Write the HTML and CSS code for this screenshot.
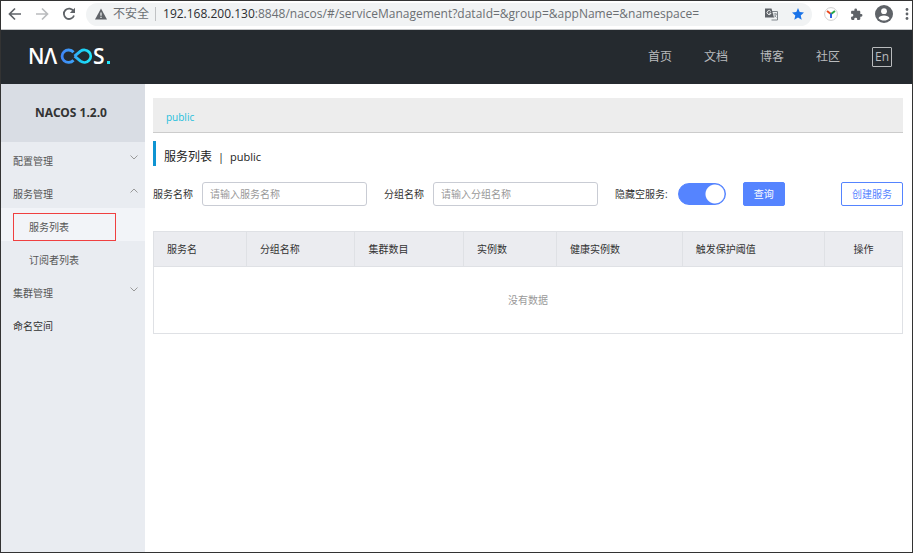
FILE: index.html
```html
<!DOCTYPE html>
<html lang="zh-CN">
<head>
<meta charset="utf-8">
<title>Nacos</title>
<link rel="stylesheet" href="styles.css">
</head>
<body>
<div class="toolbar">
  <button class="tool" aria-label="后退"><svg width="14" height="14" viewBox="0 0 14 14"><path d="M13 7H2M7 1.500 1.500 7 7 12.500" fill="none" stroke="#5f6368" stroke-width="1.700"/></svg></button>
  <button class="tool" aria-label="前进"><svg width="14" height="14" viewBox="0 0 14 14"><path d="M1 7h11M7 1.500 12.500 7 7 12.500" fill="none" stroke="#babcbe" stroke-width="1.700"/></svg></button>
  <button class="tool" aria-label="刷新"><svg width="14" height="14" viewBox="0 0 14 14"><path d="M11.600 4.200A5.200 5.200 0 1 0 12 8.500" fill="none" stroke="#5f6368" stroke-width="1.800"/><path d="M13 .8V6H7.800z" fill="#5f6368"/></svg></button>
  <div class="address">
    <svg width="12" height="12" viewBox="0 0 12 12"><path d="M6 .5 12 11.500H0z" fill="#5f6368"/><path d="M6 4.500v3.300M6 8.700v1.400" stroke="#f1f3f4" stroke-width="1.200"/></svg>
    <span class="insecure">不安全</span>
    <span class="url"><b>192.168.200.130</b>:8848/nacos/#/serviceManagement?dataId=&amp;group=&amp;appName=&amp;namespace=</span>
    <button class="tool" aria-label="翻译"><svg width="13" height="13" viewBox="0 0 13 13"><path d="M5 3.500h7.500v8.500H6.500" fill="#f1f3f4" stroke="#80868b"/><path d="M0 .5h6.500l2.500 9H0z" fill="#5f6368"/><path d="M5.800 3.500A2 2 0 1 0 6 5.200H4.200" fill="none" stroke="#fff" stroke-width=".9"/><path d="M8.500 6H12M10.200 5v1M11.300 6c-.3 1.600-1.300 2.700-2.300 3.500M9.500 7.500l2 2" fill="none" stroke="#80868b" stroke-width=".8"/></svg></button>
    <button class="tool" aria-label="收藏"><svg width="12" height="12" viewBox="0 0 12 12"><path d="m6 0 1.700 4.100 4.300.4-3.300 2.900 1 4.400L6 9.500l-3.700 2.300 1-4.400L0 4.500l4.300-.4z" fill="#1a73e8"/></svg></button>
  </div>
  <div class="extensions">
    <button class="tool" aria-label="扩展"><svg width="14" height="14" viewBox="0 0 14 14"><circle cx="7" cy="7" r="6.400" fill="#fff" stroke="#d0d0d0"/><path d="M7 7 3 4" stroke="#ea4a1f" stroke-width="2"/><path d="m7 7 4-3" stroke="#25a845" stroke-width="2"/><path d="M7 6.500V11" stroke="#2f63e0" stroke-width="2"/></svg></button>
    <button class="tool" aria-label="扩展程序"><svg width="13" height="13" viewBox="0 0 24 24"><path d="M20.500 11H19V7c0-1.100-.9-2-2-2h-4V3.500a2.500 2.500 0 0 0-5 0V5H4c-1.100 0-2 .9-2 2v3.800h1.500a2.700 2.700 0 0 1 0 5.400H2V20c0 1.100.9 2 2 2h3.800v-1.500a2.700 2.700 0 0 1 5.400 0V22H17c1.100 0 2-.9 2-2v-4h1.500a2.500 2.500 0 0 0 0-5z" fill="#5f6368"/></svg></button>
    <button class="tool" aria-label="用户"><svg width="18" height="18" viewBox="0 0 18 18"><circle cx="9" cy="9" r="9" fill="#5f6368"/><circle cx="9" cy="6.200" r="2.900" fill="#fff"/><path d="M3.500 13.200C4.300 9.600 13.700 9.600 14.500 13.200 11.600 16.400 6.400 16.400 3.500 13.200z" fill="#fff"/></svg></button>
    <button class="tool" aria-label="菜单"><svg width="4" height="12" viewBox="0 0 4 12"><g fill="#5f6368"><circle cx="2" cy="1.500" r="1.400"/><circle cx="2" cy="6" r="1.400"/><circle cx="2" cy="10.500" r="1.400"/></g></svg></button>
  </div>
</div>

<header class="header">
  <a class="logo" href="#" aria-label="Nacos">
    <svg width="84" height="32" viewBox="0 0 84 32">
      <defs><linearGradient id="loop" gradientUnits="userSpaceOnUse" x1="31" y1="0" x2="63" y2="0"><stop offset="0" stop-color="#3f82f7"/><stop offset=".45" stop-color="#3da5f8"/><stop offset=".65" stop-color="#1ccbf5"/><stop offset="1" stop-color="#22e6fb"/></linearGradient></defs>
      <text class="logo-text" x="-1" y="23">N</text>
      <text class="logo-text" x="15" y="23">Λ</text>
      <path d="M44.500 11.200A6.500 6.200 0 1 0 44.500 19.200M45.500 15.200 51.500 10.200A6.400 6.200 0 1 1 51.500 20.200L45.500 15.200" fill="none" stroke="url(#loop)" stroke-width="2.800"/>
      <text class="logo-text" x="64" y="23">S</text>
      <rect x="78" y="20" width="3" height="3" fill="#22e6fb"/>
    </svg>
  </a>
  <nav class="nav">
    <a href="#">首页</a>
    <a href="#">文档</a>
    <a href="#">博客</a>
    <a href="#">社区</a>
    <button class="lang">En</button>
  </nav>
</header>

<div class="layout">
  <aside class="sidebar">
    <h1 class="version">NACOS 1.2.0</h1>
    <nav class="menu">
      <a class="item" href="#">配置管理<svg class="arrow" width="8" height="5" viewBox="0 0 8 5"><path d="m.5.5 3.500 3.500L7.500.5"/></svg></a>
      <a class="item" href="#">服务管理<svg class="arrow" width="8" height="5" viewBox="0 0 8 5"><path d="M.5 4.500 4 1l3.500 3.500"/></svg></a>
      <a class="item sub active" href="#"><span class="marked">服务列表</span></a>
      <a class="item sub" href="#"><span>订阅者列表</span></a>
      <a class="item" href="#">集群管理<svg class="arrow" width="8" height="5" viewBox="0 0 8 5"><path d="m.5.5 3.500 3.500L7.500.5"/></svg></a>
      <a class="item leaf" href="#">命名空间</a>
    </nav>
  </aside>

  <main class="main">
    <div class="namespaces"><a href="#">public</a></div>
    <h2 class="title"><span>服务列表</span><span>|</span><span>public</span></h2>
    <form class="search">
      <label for="service">服务名称</label>
      <input class="field" id="service" type="text" placeholder="请输入服务名称">
      <label for="group">分组名称</label>
      <input class="field" id="group" type="text" placeholder="请输入分组名称">
      <label for="hide">隐藏空服务:</label>
      <input class="switch" id="hide" type="checkbox" role="switch" checked>
      <button class="btn primary" type="button">查询</button>
      <button class="btn outline" type="button">创建服务</button>
    </form>
    <table class="services">
      <colgroup><col class="c-name"><col class="c-group"><col class="c-cluster"><col class="c-inst"><col class="c-healthy"><col class="c-limit"><col class="c-action"></colgroup>
      <thead><tr><th>服务名</th><th>分组名称</th><th>集群数目</th><th>实例数</th><th>健康实例数</th><th>触发保护阈值</th><th class="action">操作</th></tr></thead>
      <tbody><tr><td colspan="7">没有数据</td></tr></tbody>
    </table>
  </main>
</div>
</body>
</html>
```

FILE: styles.css
```css
* {
  box-sizing: border-box;
}

body {
  margin: 0;
  min-height: 100vh;
  display: flex;
  flex-direction: column;
  border: 1px solid #333;
  background: #fff;
  color: #333;
  font-family: "Open Sans", "Noto Sans CJK SC", sans-serif;
  font-size: 10px;
  line-height: 16px;
}

a {
  color: inherit;
  text-decoration: none;
}

button,
input {
  font: inherit;
}

svg {
  display: block;
}

/* Browser toolbar */
.toolbar {
  display: flex;
  align-items: center;
  gap: 13px;
  height: 29px;
  padding: 0 3px 2px 7px;
  border-bottom: 1px solid #c4c6c8;
}

.tool {
  flex: none;
  padding: 0;
  border: 0;
  background: none;
}

.address {
  flex: 1;
  display: flex;
  align-items: center;
  gap: 6px;
  height: 23px;
  margin: 0 12px 0 -3px;
  padding: 0 8px 0 9px;
  border-radius: 12px;
  background: #f1f3f4;
  color: #6b6f73;
  font-size: 12px;
  white-space: nowrap;
}

.insecure {
  padding-right: 6px;
  border-right: 1px solid #c0c2c4;
  line-height: 14px;
}

.url {
  flex: 1;
  padding-left: 1px;
}

.url b {
  color: #2b2d30;
  font-weight: 400;
}

.address .tool + .tool {
  margin-left: 8px;
}

.extensions {
  display: flex;
  align-items: center;
  gap: 12px;
  margin-left: -13px;
}

/* Site header */
.header {
  display: flex;
  align-items: center;
  justify-content: space-between;
  height: 54px;
  padding: 0 20px 0 28px;
  background: #252a2f;
}

.logo-text {
  fill: #fff;
  font-family: "Open Sans", sans-serif;
  font-size: 21px;
  font-weight: 600;
}

.nav {
  display: flex;
  align-items: center;
  gap: 32px;
  color: #b9bbbd;
  font-size: 12px;
}

.lang {
  width: 20px;
  height: 20px;
  padding: 0;
  border: 1px solid #b9bbbd;
  border-radius: 1px;
  background: none;
  color: inherit;
  line-height: 16px;
}

/* Sidebar */
.layout {
  flex: 1;
  display: flex;
}

.sidebar {
  flex: none;
  width: 144px;
  background: #e9ecf1;
}

.version {
  margin: 0;
  padding-right: 4px;
  background: #d9dde4;
  font-family: "Noto Sans", sans-serif;
  font-size: 12px;
  font-weight: 700;
  line-height: 58px;
  text-align: center;
}

.item {
  display: flex;
  align-items: center;
  justify-content: space-between;
  height: 33px;
  padding: 4px 7px 0 12px;
  color: #555;
}

.leaf {
  color: #333;
}

.arrow {
  margin-bottom: 6px;
  fill: none;
  stroke: #999;
}

.sub span {
  width: 103px;
  padding: 5px 15px;
  border: 1px solid transparent;
}

.active {
  background: #f2f4f8;
}

.sub .marked {
  border-color: #f04040;
}

/* Content */
.main {
  flex: 1;
  min-width: 0;
  padding: 14px 9px 0 8px;
}

.namespaces {
  padding: 11px 13px 7px;
  border-bottom: 1px solid #ccc;
  background: #ededed;
  color: #25bfdc;
}

.title {
  display: flex;
  gap: 6px;
  margin: 8px 0 16px;
  padding: 7px 0 0 8px;
  border-left: 3px solid #0e94d2;
  color: #222;
  font-size: 12px;
  font-weight: 400;
  line-height: 18px;
}

.title span + span {
  font-size: 11px;
}

.search {
  display: flex;
  align-items: center;
  margin-bottom: 25px;
  white-space: nowrap;
}

.field {
  flex: 0 1 165px;
  min-width: 0;
  height: 24px;
  margin: 0 17px 0 9px;
  padding: 0 7px;
  border: 1px solid #c9ccd4;
  border-radius: 3px;
  color: #333;
}

.field::placeholder {
  color: #999;
}

.switch {
  appearance: none;
  flex: none;
  width: 48px;
  height: 22px;
  margin: 0 17px 0 10px;
  border: 1px solid #5584ff;
  border-radius: 11px;
  background: radial-gradient(circle at calc(100% - 10px) 50%, #fff 9px, #5584ff 10px);
}

.btn {
  flex: none;
  height: 24px;
  padding: 0 10px;
  border: 1px solid #5584ff;
  border-radius: 2px;
}

.primary {
  background: #5584ff;
  color: #fff;
}

.outline {
  margin-left: auto;
  background: #fff;
  color: #5584ff;
}

.services {
  width: 100%;
  border-collapse: collapse;
  table-layout: fixed;
}

.services th,
.services td {
  border: 1px solid #dfe1e5;
}

.services th {
  height: 35px;
  padding: 0 13px;
  background: #ebecf0;
  font-weight: 400;
  text-align: left;
}

.services .action {
  text-align: center;
}

.services td {
  height: 67px;
  padding: 0;
  color: #999;
  text-align: center;
}

.c-name {
  width: 12.4%;
}

.c-group,
.c-cluster {
  width: 14.5%;
}

.c-inst {
  width: 12.4%;
}

.c-healthy {
  width: 16.8%;
}

.c-limit {
  width: 19%;
}
```
